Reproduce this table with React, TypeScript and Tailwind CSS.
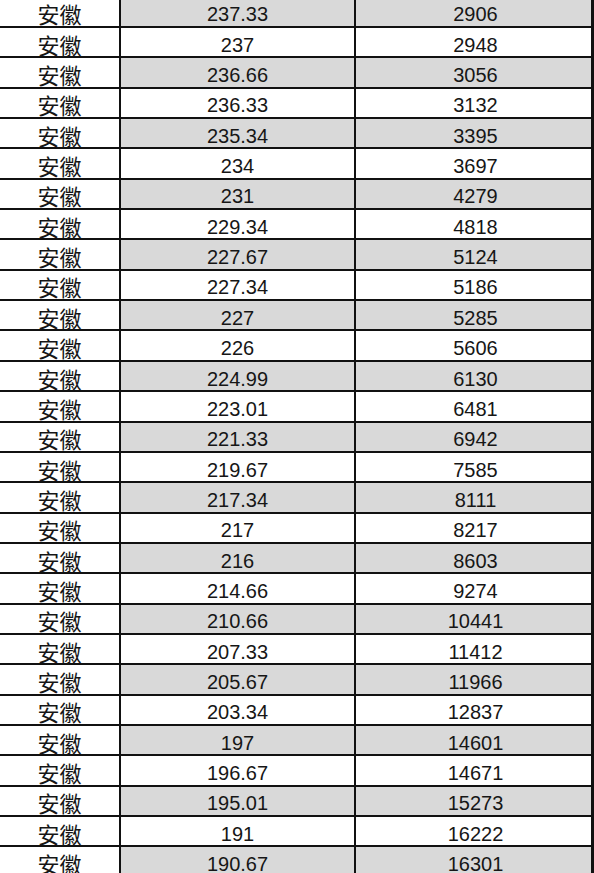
import React from 'react';

const rows: [string, string][] = [
  ['237.33', '2906'],
  ['237', '2948'],
  ['236.66', '3056'],
  ['236.33', '3132'],
  ['235.34', '3395'],
  ['234', '3697'],
  ['231', '4279'],
  ['229.34', '4818'],
  ['227.67', '5124'],
  ['227.34', '5186'],
  ['227', '5285'],
  ['226', '5606'],
  ['224.99', '6130'],
  ['223.01', '6481'],
  ['221.33', '6942'],
  ['219.67', '7585'],
  ['217.34', '8111'],
  ['217', '8217'],
  ['216', '8603'],
  ['214.66', '9274'],
  ['210.66', '10441'],
  ['207.33', '11412'],
  ['205.67', '11966'],
  ['203.34', '12837'],
  ['197', '14601'],
  ['196.67', '14671'],
  ['195.01', '15273'],
  ['191', '16222'],
  ['190.67', '16301'],
];

export default function App() {
  return (
    <div className="w-[594px] h-[873px] overflow-hidden bg-white text-[#161616]">
      <div className="-mt-[2.3px]">
        {rows.map(([score, rank], i) => {
          const shaded = i % 2 === 0;
          return (
            <div key={i} className="flex h-[30.35px] border-b-2 border-[#111]">
              <div className="w-[121px] border-r-2 border-[#111] flex items-center justify-center pt-[4px] text-[22px] font-['Noto_Sans_CJK_SC',sans-serif]">
                安徽
              </div>
              <div
                className={`w-[235px] border-r-2 border-[#111] flex items-center justify-center pt-[5px] text-[20px] font-['Liberation_Sans',Arial,sans-serif] ${
                  shaded ? 'bg-[#d9d9d9]' : 'bg-white'
                }`}
              >
                {score}
              </div>
              <div
                className={`w-[238px] border-r-[3px] border-[#111] flex items-center justify-center pt-[5px] pl-[4px] text-[20px] font-['Liberation_Sans',Arial,sans-serif] ${
                  shaded ? 'bg-[#d9d9d9]' : 'bg-white'
                }`}
              >
                {rank}
              </div>
            </div>
          );
        })}
      </div>
    </div>
  );
}
